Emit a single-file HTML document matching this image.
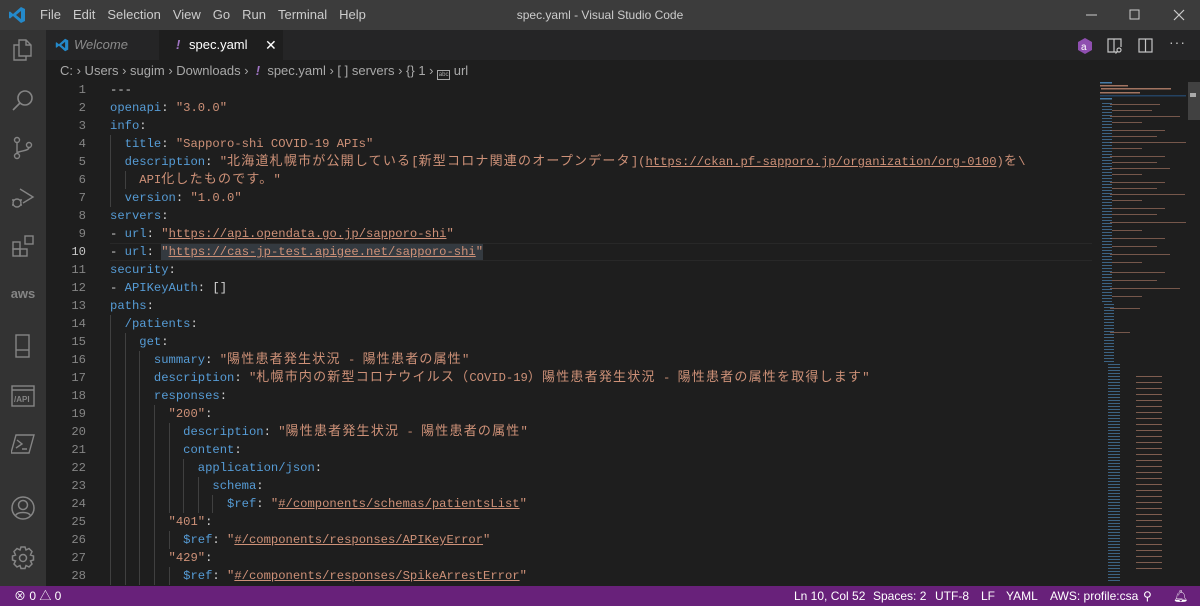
<!DOCTYPE html>
<html><head><meta charset="utf-8">
<style>
*{margin:0;padding:0;box-sizing:border-box}
body{width:1200px;height:606px;overflow:hidden;background:#1e1e1e;font-family:"Liberation Sans","Noto Sans CJK JP",sans-serif;position:relative;color:#ccc}
.title{position:absolute;left:0;top:0;width:1200px;height:30px;background:#3c3c3c;font-size:13px;color:#ccc}
.menu{position:absolute;left:40px;top:7px;display:flex;gap:0}
.menu span{margin-right:12px}
.wt{position:absolute;left:0;width:1200px;top:8px;text-align:center;font-size:12px}
.act{position:absolute;left:0;top:30px;width:46px;height:556px;background:#333}
.act svg{position:absolute;left:11px}
.tabs{position:absolute;left:46px;top:30px;width:1154px;height:30px;background:#252526}
.tab{position:absolute;top:0;height:30px;font-size:13px;line-height:30px}
.bc{position:absolute;left:46px;top:60px;width:1154px;height:22px;font-size:13px;color:#a9a9a9;line-height:22px;padding-left:14px}
.code{position:absolute;left:46px;top:81px;width:1050px;font-family:"Liberation Mono","Noto Sans CJK JP",monospace;font-size:12.2px}
.l{height:18px;line-height:18px;white-space:pre;position:relative;color:#d4d4d4}
.n{position:absolute;left:0;width:40px;text-align:right;color:#858585}
.t{position:absolute;left:64px}
i{display:inline-block;width:2ch;height:18px;vertical-align:top;border-left:1px solid #404040}
.k{color:#569cd6}.s{color:#ce9178}
.u{text-decoration:underline;text-decoration-color:#ce9178}
.j{font-size:13px;letter-spacing:1.2px}
.status{position:absolute;left:0;top:586px;width:1200px;height:20px;background:#68217a;color:#fff;font-size:12px;line-height:20px}
.status span{position:absolute;top:0}
</style></head><body>
<div class="title">
<svg style="position:absolute;left:8px;top:6px" width="18" height="18" viewBox="0 0 18 18"><path d="M13 1 L17 3 V15 L13 17 L5 10 L2 12.5 L1 12 V6 L2 5.5 L5 8 Z M13 5 L8 9 L13 13 Z" fill="#2489ca"/></svg>
<div class="menu"><span>File</span><span>Edit</span><span>Selection</span><span>View</span><span>Go</span><span>Run</span><span>Terminal</span><span>Help</span></div>
<div class="wt">spec.yaml - Visual Studio Code</div>
<svg style="position:absolute;left:1084px;top:9px" width="110" height="12"><line x1="2" y1="6" x2="13" y2="6" stroke="#ccc"/><rect x="46" y="1" width="9" height="9" fill="none" stroke="#ccc"/><path d="M90 1 L100 11 M100 1 L90 11" stroke="#ccc" stroke-width="1.2"/></svg>
</div>
<div class="act">
<svg style="top:8px" width="24" height="24" viewBox="0 0 24 24" fill="none" stroke="#858585" stroke-width="1.4"><path d="M8 2h7l5 5v11H8z M15 2v5h5 M8 7H3v15h12v-4"/></svg>
<svg style="top:58px" width="24" height="24" viewBox="0 0 24 24" fill="none" stroke="#858585" stroke-width="1.6"><circle cx="14" cy="10" r="7"/><path d="M9 15L2 22"/></svg>
<svg style="top:106px" width="24" height="24" viewBox="0 0 24 24" fill="none" stroke="#858585" stroke-width="1.4"><circle cx="6" cy="4" r="2.5"/><circle cx="6" cy="20" r="2.5"/><circle cx="18" cy="9" r="2.5"/><path d="M6 6.5v11 M18 11.5c0 4-12 3-12 6"/></svg>
<svg style="top:156px" width="24" height="24" viewBox="0 0 24 24" fill="none" stroke="#858585" stroke-width="1.4"><path d="M9 3l13 8-10 6"/><circle cx="6" cy="17" r="4"/><path d="M1 14h2M1 19h2M9 14h2M9 19h2"/></svg>
<svg style="top:204px" width="24" height="24" viewBox="0 0 24 24" fill="none" stroke="#858585" stroke-width="1.4"><rect x="2" y="8" width="7" height="7"/><rect x="2" y="15" width="7" height="7"/><rect x="9" y="15" width="7" height="7"/><rect x="14" y="2" width="8" height="8"/></svg>
<div style="position:absolute;left:0;width:46px;top:256px;text-align:center;color:#858585;font-size:13px;font-weight:bold">aws</div>
<svg style="top:304px" width="24" height="24" viewBox="0 0 24 24" fill="none" stroke="#858585" stroke-width="1.4"><rect x="5" y="1" width="13" height="22"/><path d="M5 16h13"/></svg>
<svg style="top:354px" width="24" height="24" viewBox="0 0 24 24" fill="none" stroke="#858585" stroke-width="1.4"><rect x="1" y="2" width="22" height="20"/><path d="M1 6h22"/><text x="3" y="18" font-size="8" fill="#858585" stroke="none" font-family="Liberation Sans" font-weight="bold">/API</text></svg>
<svg style="top:402px" width="24" height="24" viewBox="0 0 24 24" fill="none" stroke="#858585" stroke-width="1.4"><path d="M5 3h18l-5 18H0z M6 8l5 4-6 4 M11 17h5"/></svg>
<svg style="top:466px" width="24" height="24" viewBox="0 0 24 24" fill="none" stroke="#858585" stroke-width="1.5"><circle cx="12" cy="12" r="11"/><circle cx="12" cy="9" r="4.5"/><path d="M4.5 19.5c2-4 13-4 15 0"/></svg>
<svg style="top:516px" width="24" height="24" viewBox="0 0 24 24" fill="none" stroke="#858585" stroke-width="1.5"><path d="M10 1h4l1 3 3-1.5 3 3L19.5 9l3 1v4l-3 1 1.5 3-3 3-3-1.5-1 3h-4l-1-3-3 1.5-3-3L4.5 15l-3-1v-4l3-1L3 5.5l3-3L9 4z"/><circle cx="12" cy="12" r="3.5"/></svg>
</div>
<div class="tabs">
<div class="tab" style="left:0;width:113px;color:#8b8b8b;font-style:italic;padding-left:28px">Welcome
<svg style="position:absolute;left:9px;top:8px" width="14" height="14" viewBox="0 0 18 18"><path d="M13 1 L17 3 V15 L13 17 L5 10 L2 12.5 L1 12 V6 L2 5.5 L5 8 Z M13 5 L8 9 L13 13 Z" fill="#2489ca"/></svg></div>
<div class="tab" style="left:113px;width:124px;background:#1e1e1e;color:#fff;padding-left:30px"><span style="position:absolute;left:17px;color:#a074c4;font-style:italic;font-weight:bold">!</span>spec.yaml<span style="position:absolute;left:106px;font-size:14px">✕</span></div>
<svg style="position:absolute;left:1030px;top:7px" width="18" height="18" viewBox="0 0 18 18"><path d="M9 1l7 4v8l-7 4-7-4V5z" fill="#8f4fb0"/><text x="5" y="13" font-size="10" fill="#fff" font-family="Liberation Sans">a</text></svg>
<svg style="position:absolute;left:1061px;top:8px" width="16" height="16" viewBox="0 0 16 16" fill="none" stroke="#c5c5c5" stroke-width="1.2"><path d="M10 14H1V1h13v8 M7 1v13"/><circle cx="12" cy="12" r="2"/><path d="M10.5 13.5l-2 2"/></svg>
<svg style="position:absolute;left:1092px;top:8px" width="16" height="16" viewBox="0 0 16 16" fill="none" stroke="#c5c5c5" stroke-width="1.2"><rect x="1" y="1" width="13" height="13"/><path d="M7.5 1v13"/></svg>
<div style="position:absolute;left:1123px;top:4px;color:#c5c5c5;font-size:14px;letter-spacing:1px">···</div>
</div>
<div class="bc">C: › Users › sugim › Downloads › <span style="color:#a074c4;font-style:italic;font-weight:bold">&nbsp;!&nbsp;</span> spec.yaml › [ ] servers › {} 1 › <span style="display:inline-block;width:13px;height:10px;border:1px solid #a9a9a9;font-size:6px;line-height:8px;vertical-align:-1px;text-align:center">abc</span> url</div>

<div style="position:absolute;left:110px;top:243px;width:982px;height:18px;border-top:1px solid #282828;border-bottom:1px solid #282828"></div>
<div style="position:absolute;left:161px;top:244px;width:322px;height:16px;background:#343a40"></div>

<div class="code">
<div class="l"><span class="n">1</span><span class="t">---</span></div>
<div class="l"><span class="n">2</span><span class="t"><span class="k">openapi</span>: <span class="s">"3.0.0"</span></span></div>
<div class="l"><span class="n">3</span><span class="t"><span class="k">info</span>:</span></div>
<div class="l"><span class="n">4</span><span class="t"><i></i><span class="k">title</span>: <span class="s">"Sapporo-shi COVID-19 APIs"</span></span></div>
<div class="l"><span class="n">5</span><span class="t"><i></i><span class="k">description</span>: <span class="s">"<span class="j">北海道札幌市が公開している</span>[<span class="j">新型コロナ関連のオープンデータ</span>](<span class="u">https://ckan.pf-sapporo.jp/organization/org-0100</span>)<span class="j">を</span>\</span></span></div>
<div class="l"><span class="n">6</span><span class="t"><i></i><i></i><span class="s">API<span class="j">化したものです。</span>"</span></span></div>
<div class="l"><span class="n">7</span><span class="t"><i></i><span class="k">version</span>: <span class="s">"1.0.0"</span></span></div>
<div class="l"><span class="n">8</span><span class="t"><span class="k">servers</span>:</span></div>
<div class="l"><span class="n">9</span><span class="t">- <span class="k">url</span>: <span class="s">"<span class="u">https://api.opendata.go.jp/sapporo-shi</span>"</span></span></div>
<div class="l"><span class="n" style="color:#c6c6c6">10</span><span class="t">- <span class="k">url</span>: <span class="s">"<span class="u">https://cas-jp-test.apigee.net/sapporo-shi</span>"</span></span></div>
<div class="l"><span class="n">11</span><span class="t"><span class="k">security</span>:</span></div>
<div class="l"><span class="n">12</span><span class="t">- <span class="k">APIKeyAuth</span>: []</span></div>
<div class="l"><span class="n">13</span><span class="t"><span class="k">paths</span>:</span></div>
<div class="l"><span class="n">14</span><span class="t"><i></i><span class="k">/patients</span>:</span></div>
<div class="l"><span class="n">15</span><span class="t"><i></i><i></i><span class="k">get</span>:</span></div>
<div class="l"><span class="n">16</span><span class="t"><i></i><i></i><i></i><span class="k">summary</span>: <span class="s">"<span class="j">陽性患者発生状況</span> - <span class="j">陽性患者の属性</span>"</span></span></div>
<div class="l"><span class="n">17</span><span class="t"><i></i><i></i><i></i><span class="k">description</span>: <span class="s">"<span class="j">札幌市内の新型コロナウイルス（</span>COVID-19<span class="j">）陽性患者発生状況</span> - <span class="j">陽性患者の属性を取得します</span>"</span></span></div>
<div class="l"><span class="n">18</span><span class="t"><i></i><i></i><i></i><span class="k">responses</span>:</span></div>
<div class="l"><span class="n">19</span><span class="t"><i></i><i></i><i></i><i></i><span class="s">"200"</span>:</span></div>
<div class="l"><span class="n">20</span><span class="t"><i></i><i></i><i></i><i></i><i></i><span class="k">description</span>: <span class="s">"<span class="j">陽性患者発生状況</span> - <span class="j">陽性患者の属性</span>"</span></span></div>
<div class="l"><span class="n">21</span><span class="t"><i></i><i></i><i></i><i></i><i></i><span class="k">content</span>:</span></div>
<div class="l"><span class="n">22</span><span class="t"><i></i><i></i><i></i><i></i><i></i><i></i><span class="k">application/json</span>:</span></div>
<div class="l"><span class="n">23</span><span class="t"><i></i><i></i><i></i><i></i><i></i><i></i><i></i><span class="k">schema</span>:</span></div>
<div class="l"><span class="n">24</span><span class="t"><i></i><i></i><i></i><i></i><i></i><i></i><i></i><i></i><span class="k">$ref</span>: <span class="s">"<span class="u">#/components/schemas/patientsList</span>"</span></span></div>
<div class="l"><span class="n">25</span><span class="t"><i></i><i></i><i></i><i></i><span class="s">"401"</span>:</span></div>
<div class="l"><span class="n">26</span><span class="t"><i></i><i></i><i></i><i></i><i></i><span class="k">$ref</span>: <span class="s">"<span class="u">#/components/responses/APIKeyError</span>"</span></span></div>
<div class="l"><span class="n">27</span><span class="t"><i></i><i></i><i></i><i></i><span class="s">"429"</span>:</span></div>
<div class="l"><span class="n">28</span><span class="t"><i></i><i></i><i></i><i></i><i></i><span class="k">$ref</span>: <span class="s">"<span class="u">#/components/responses/SpikeArrestError</span>"</span></span></div>
</div>

<svg style="position:absolute;left:1096px;top:82px" width="104" height="504">
<defs>
<pattern id="pb" width="12" height="3" patternUnits="userSpaceOnUse"><rect x="0" y="0" width="12" height="1" fill="#569cd6"/></pattern>
<pattern id="po" width="40" height="6" patternUnits="userSpaceOnUse"><rect x="0" y="0" width="26" height="1" fill="#ce9178"/></pattern>
</defs>
<g opacity="0.75">
<rect x="4" y="0" width="12" height="1.5" fill="#569cd6"/><rect x="4" y="3" width="28" height="1.5" fill="#ce9178"/>
<rect x="5" y="6" width="70" height="1.5" fill="#ce9178"/><rect x="4" y="10" width="40" height="1.5" fill="#ce9178"/>
<rect x="4" y="13" width="90" height="1.5" fill="#264f78"/><rect x="4" y="16" width="12" height="1.5" fill="#569cd6"/>
</g>
<g fill="#ce9178" opacity="0.5">
<rect x="14" y="22" width="50" height="1"/><rect x="16" y="28" width="40" height="1"/><rect x="14" y="34" width="70" height="1"/><rect x="16" y="40" width="30" height="1"/>
<rect x="14" y="48" width="55" height="1"/><rect x="16" y="54" width="45" height="1"/><rect x="14" y="60" width="80" height="1"/><rect x="16" y="66" width="30" height="1"/>
<rect x="14" y="74" width="55" height="1"/><rect x="16" y="80" width="45" height="1"/><rect x="14" y="86" width="60" height="1"/><rect x="16" y="92" width="30" height="1"/>
<rect x="14" y="100" width="55" height="1"/><rect x="16" y="106" width="45" height="1"/><rect x="14" y="112" width="75" height="1"/><rect x="16" y="118" width="30" height="1"/>
<rect x="14" y="126" width="55" height="1"/><rect x="16" y="132" width="45" height="1"/><rect x="14" y="140" width="80" height="1"/><rect x="16" y="148" width="30" height="1"/>
<rect x="14" y="156" width="55" height="1"/><rect x="16" y="164" width="45" height="1"/><rect x="14" y="172" width="60" height="1"/><rect x="16" y="180" width="30" height="1"/>
<rect x="14" y="190" width="55" height="1"/><rect x="16" y="198" width="45" height="1"/><rect x="14" y="206" width="70" height="1"/><rect x="16" y="214" width="30" height="1"/>
<rect x="14" y="226" width="30" height="1"/><rect x="14" y="250" width="20" height="1"/>
</g>
<g opacity="0.55">
<rect x="6" y="20" width="10" height="200" fill="url(#pb)"/><rect x="8" y="220" width="10" height="60" fill="url(#pb)"/><rect x="12" y="280" width="12" height="220" fill="url(#pb)"/>
<rect x="26" y="290" width="40" height="200" fill="url(#po)"/>
</g>
<rect x="90" y="0" width="14" height="504" fill="#1e1e1e"/>
<rect x="92" y="0" width="12" height="38" fill="#4a4a4a" opacity="0.8"/>
<rect x="94" y="11" width="6" height="4" fill="#aaa"/>
</svg>

<div class="status">
<span style="left:14px">⊗ 0 △ 0</span>
<span style="left:794px">Ln 10, Col 52</span>
<span style="left:873px">Spaces: 2</span>
<span style="left:935px">UTF-8</span>
<span style="left:981px">LF</span>
<span style="left:1006px">YAML</span>
<span style="left:1050px">AWS: profile:csa</span>
<span style="left:1143px">⚲</span>
<span style="left:1173px">🔔︎</span>
</div>
</body></html>
